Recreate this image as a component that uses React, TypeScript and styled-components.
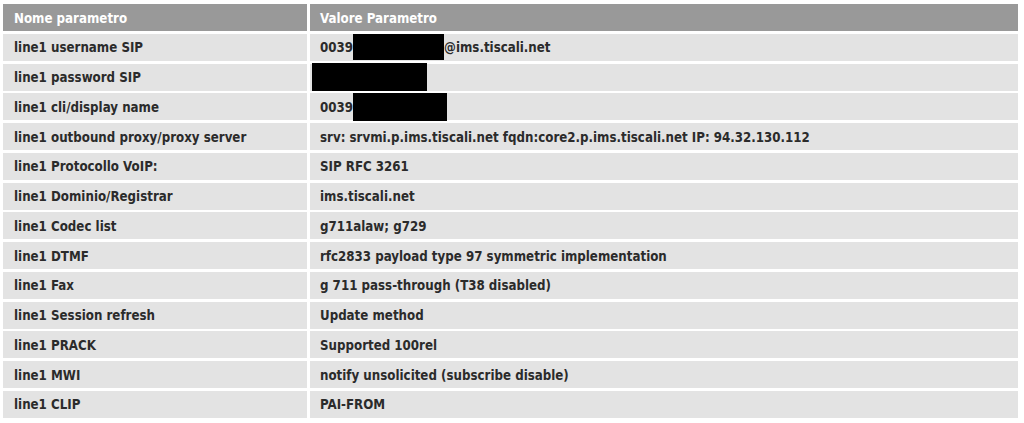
import styled, { createGlobalStyle } from "styled-components";

type Param = {
  name: string;
  value: string;
  prefix?: string;
  suffix?: string;
  redact?: { width: number; height: number; shift?: number };
};

const params: Param[] = [
  {
    name: "line1 username SIP",
    value: "",
    prefix: "0039",
    suffix: "@ims.tiscali.net",
    redact: { width: 91, height: 26 },
  },
  { name: "line1 password SIP", value: "", redact: { width: 115, height: 28, shift: -8 } },
  { name: "line1 cli/display name", value: "", prefix: "0039", redact: { width: 94, height: 28 } },
  {
    name: "line1 outbound proxy/proxy server",
    value: "srv: srvmi.p.ims.tiscali.net fqdn:core2.p.ims.tiscali.net IP: 94.32.130.112",
  },
  { name: "line1 Protocollo VoIP:", value: "SIP RFC 3261" },
  { name: "line1 Dominio/Registrar", value: "ims.tiscali.net" },
  { name: "line1 Codec list", value: "g711alaw; g729" },
  { name: "line1 DTMF", value: "rfc2833 payload type 97 symmetric implementation" },
  { name: "line1 Fax", value: "g 711 pass-through (T38 disabled)" },
  { name: "line1 Session refresh", value: "Update method" },
  { name: "line1 PRACK", value: "Supported 100rel" },
  { name: "line1 MWI", value: "notify unsolicited (subscribe disable)" },
  { name: "line1 CLIP", value: "PAI-FROM" },
];

function App() {
  return (
    <>
      <GlobalStyle />
      <ParamTable>
        <HeadCell $pad={11}>Nome parametro</HeadCell>
        <HeadCell $pad={10}>Valore Parametro</HeadCell>
        {params.map((p) => (
          <Row key={p.name}>
            <Cell $pad={11}>{p.name}</Cell>
            <Cell $pad={10}>
              {p.prefix}
              {p.redact && (
                <Redacted
                  style={{
                    width: p.redact.width,
                    height: p.redact.height,
                    marginLeft: p.redact.shift ?? 0,
                  }}
                />
              )}
              {p.suffix}
              {p.value}
            </Cell>
          </Row>
        ))}
      </ParamTable>
    </>
  );
}

const GlobalStyle = createGlobalStyle`
  body {
    margin: 0;
    background: #ffffff;
    font-family: "DejaVu Sans Condensed", "DejaVu Sans", sans-serif;
  }
`;

const ParamTable = styled.div`
  display: grid;
  grid-template-columns: 304px 708px;
  grid-auto-rows: 27px;
  column-gap: 3px;
  row-gap: 2.75px;
  padding: 4px 6px 0 3px;
`;

const Row = styled.div`
  display: contents;
`;

const Cell = styled.div<{ $pad: number }>`
  display: flex;
  align-items: center;
  padding-left: ${(props) => props.$pad}px;
  padding-top: 1px;
  background: #e3e3e3;
  color: #2b2b2b;
  font-size: 13.2px;
  font-weight: bold;
  white-space: nowrap;
`;

const HeadCell = styled(Cell)`
  background: #999999;
  color: #ffffff;
`;

const Redacted = styled.span`
  display: inline-block;
  flex-shrink: 0;
  margin-top: -1px;
  background: #000000;
`;

export default App;
